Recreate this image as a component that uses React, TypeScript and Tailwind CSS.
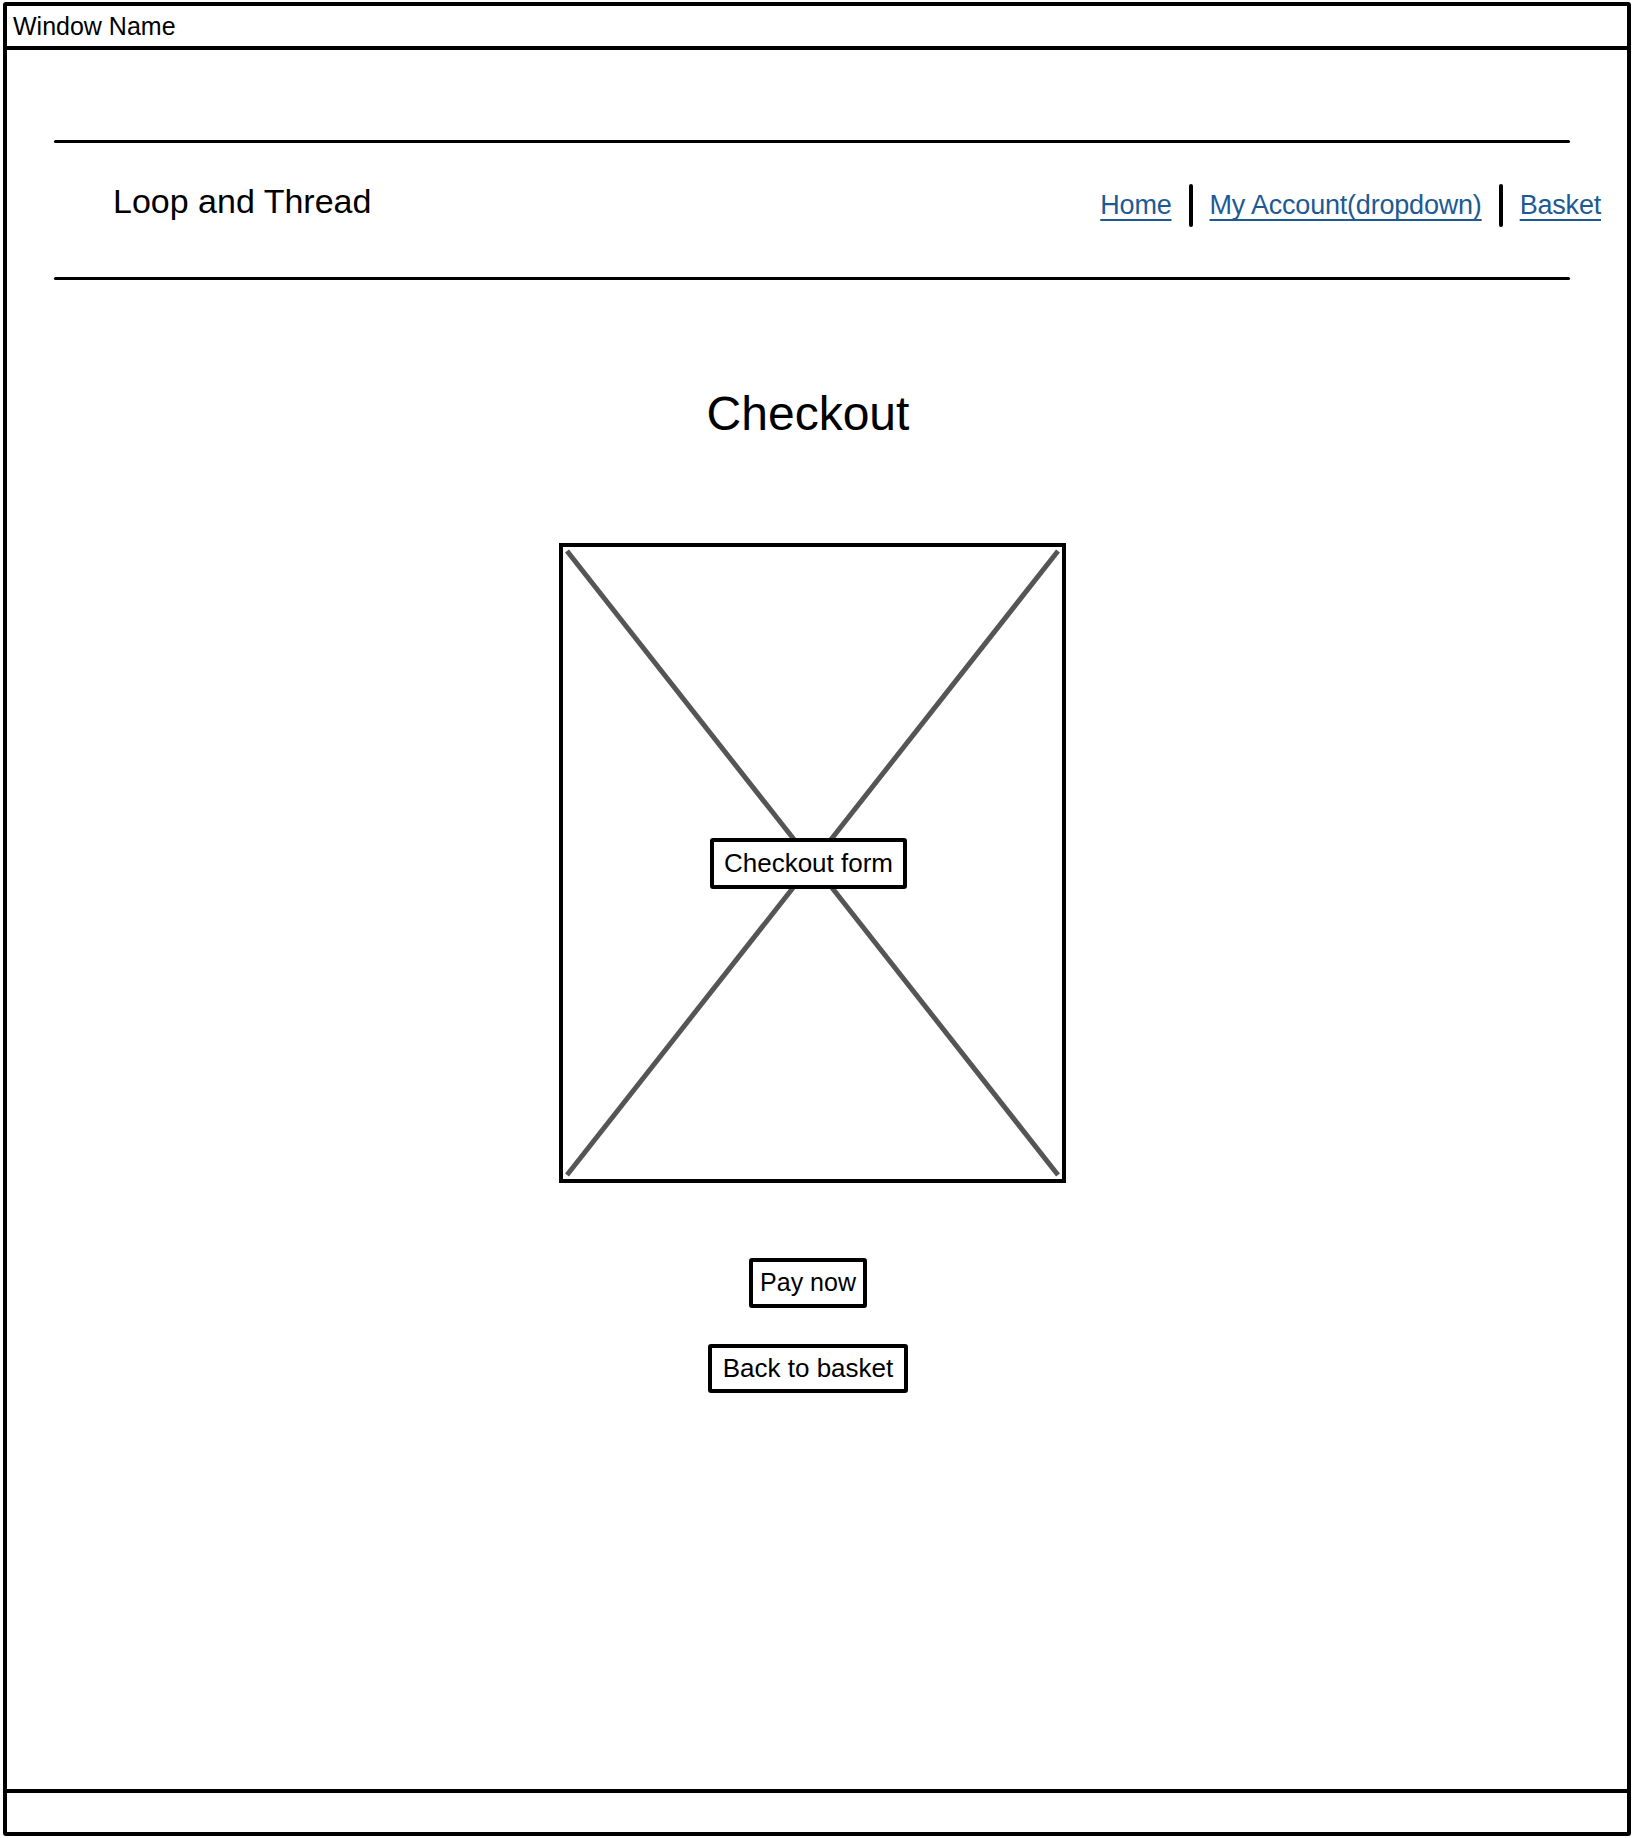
const navLinks = ["Home", "My Account(dropdown)", "Basket"]

const font = { fontFamily: '"Liberation Sans", Arial, sans-serif' }

const App = () => {
  return (
    <div className="w-[1634px] h-[1838px] bg-white pt-[2px] pl-[3px]" style={font}>
      <div className="w-[1628px] h-[1834px] border-[4px] border-black rounded-[3px] flex flex-col">
        {/* Title bar */}
        <div className="h-[44px] border-b-[4px] border-black flex items-center pl-[6px]">
          <span className="text-[25px] leading-none text-black">Window Name</span>
        </div>

        {/* Page */}
        <div className="flex-1 flex flex-col">
          {/* Header */}
          <div className="ml-[47px] mt-[90px] w-[1547px]">
            <div className="w-[1516px] h-[3px] bg-black rounded-full" />
            <div className="h-[134px] flex items-start justify-between">
              <div className="ml-[59px] mt-[33px] text-[34px] text-black">Loop and Thread</div>
              <nav className="mt-[41px] flex items-center gap-[17px]">
                {navLinks.map((label, i) => (
                  <div key={label} className="flex items-center gap-[17px]">
                    {i > 0 && <div className="w-[4px] h-[43px] bg-black rounded-full" />}
                    <a
                      href="#"
                      className="text-[27px] tracking-[-0.2px] text-[#1d5a94] underline decoration-2 underline-offset-[5px]"
                    >
                      {label}
                    </a>
                  </div>
                ))}
              </nav>
            </div>
            <div className="w-[1516px] h-[3px] bg-black rounded-full" />
          </div>

          {/* Content */}
          <div className="flex flex-col items-center pr-[18px]">
            <h1 className="mt-[107px] text-[48px] text-black leading-[54px]">Checkout</h1>

            {/* Form placeholder */}
            <div className="mt-[102px] ml-[8px] w-[507px] h-[640px] border-[4px] border-black relative flex items-center justify-center">
              <svg className="absolute inset-0" width="499" height="632" viewBox="0 0 499 632">
                <line x1="4" y1="4" x2="495" y2="628" stroke="#555" strokeWidth="5" />
                <line x1="495" y1="4" x2="4" y2="628" stroke="#555" strokeWidth="5" />
              </svg>
              <div className="relative mr-[7px] bg-white border-[4px] border-black rounded-[3px] w-[197px] h-[51px] flex items-center justify-center">
                <span className="text-[26px] text-black">Checkout form</span>
              </div>
            </div>

            <button className="mt-[75px] h-[50px] px-[7px] border-[4px] border-black rounded-[3px] bg-white text-[25px] text-black flex items-center">
              Pay now
            </button>
            <button className="mt-[36px] h-[49px] px-[11px] border-[4px] border-black rounded-[3px] bg-white text-[26px] text-black flex items-center">
              Back to basket
            </button>
          </div>
        </div>

        {/* Footer bar */}
        <div className="h-[43px] border-t-[4px] border-black" />
      </div>
    </div>
  )
}

export default App
